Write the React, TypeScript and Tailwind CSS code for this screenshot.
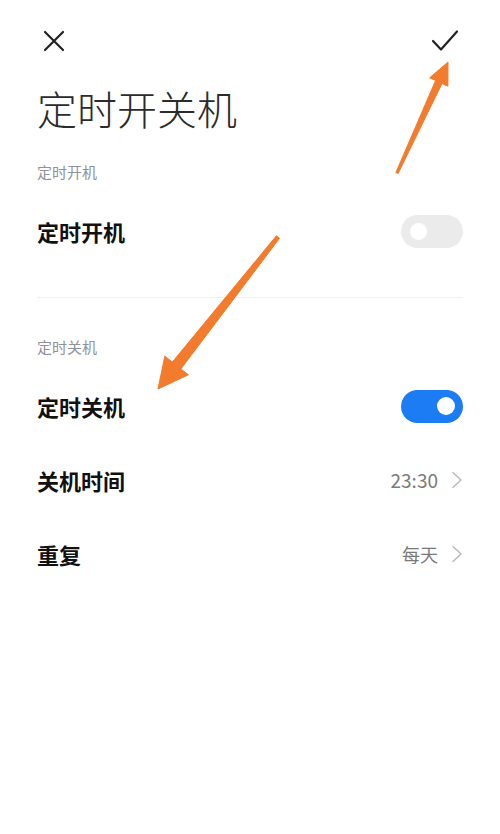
import React from 'react';

const font = { fontFamily: '"Noto Sans CJK SC", "Noto Sans", sans-serif' };

const Toggle = ({ on }: { on: boolean }) => (
  <div
    className={
      on
        ? 'w-[62px] h-[33px] rounded-full bg-[#1b7cf3] flex items-center justify-end pr-[8px]'
        : 'w-[62px] h-[33px] rounded-full bg-[#ebebeb] flex items-center justify-start pl-[9px]'
    }
  >
    <div className={on ? 'w-[18px] h-[18px] rounded-full bg-white' : 'w-[17px] h-[17px] rounded-full bg-white'} />
  </div>
);

const Chevron = () => (
  <svg width="12" height="18" viewBox="0 0 12 18" className="ml-[13px]">
    <polyline points="2,1.5 10,9 2,16.5" fill="none" stroke="#b8b8b8" strokeWidth="1.4" strokeLinecap="round" strokeLinejoin="round" />
  </svg>
);

const Row = ({ label, children }: { label: string; children: React.ReactNode }) => (
  <div className="h-[74px] flex items-center justify-between">
    <span className="text-[22px] leading-[22px] font-semibold text-[#111]">{label}</span>
    {children}
  </div>
);

export default function App() {
  return (
    <div className="relative w-[500px] h-[834px] bg-white px-[37px] overflow-hidden" style={font}>
      {/* top bar */}
      <div className="h-[82px] flex items-center justify-between pl-[6px] pr-[4px]">
        <svg width="22" height="22" viewBox="0 0 22 22">
          <path d="M2 2 L20 20 M20 2 L2 20" stroke="#222" strokeWidth="2.2" strokeLinecap="round" />
        </svg>
        <svg width="28" height="24" viewBox="0 0 28 24">
          <polyline points="2,12 10,20.5 26,2.5" fill="none" stroke="#222" strokeWidth="2.2" strokeLinecap="round" strokeLinejoin="round" />
        </svg>
      </div>

      <h1 className="mt-[6px] text-[40px] leading-[40px] font-light text-[#2b2b2b]">定时开关机</h1>

      <div className="mt-[36px] text-[15px] leading-[16px] text-[#8e929b]">定时开机</div>
      <div className="mt-[14px]">
        <Row label="定时开机">
          <Toggle on={false} />
        </Row>
      </div>

      <div className="mt-[29px] h-px bg-[#efefef]" />

      <div className="mt-[41px] text-[15px] leading-[16px] text-[#8e929b]">定时关机</div>
      <div className="mt-[14px]">
        <Row label="定时关机">
          <Toggle on />
        </Row>
        <Row label="关机时间">
          <div className="flex items-center">
            <span className="text-[19px] text-[#7a7a7a]">23:30</span>
            <Chevron />
          </div>
        </Row>
        <Row label="重复">
          <div className="flex items-center">
            <span className="text-[18px] text-[#7a7a7a]">每天</span>
            <Chevron />
          </div>
        </Row>
      </div>

      {/* orange pointer arrows */}
      <svg className="absolute inset-0 pointer-events-none" width="500" height="834" viewBox="0 0 500 834">
        <polygon
          points="395.9,172.5 435.6,80.5 429.7,77.8 448,62 447.9,86.2 442,83.5 398.1,173.5"
          fill="#f27b2d"
          stroke="#f27b2d"
          strokeWidth="1"
          strokeLinejoin="round"
        />
        <polygon
          points="276.4,235.8 172.3,362.1 164.8,356.2 158,389 188.4,374.8 180.9,368.9 279.6,238.2"
          fill="#f27b2d"
          stroke="#f27b2d"
          strokeWidth="1"
          strokeLinejoin="round"
        />
      </svg>
    </div>
  );
}
